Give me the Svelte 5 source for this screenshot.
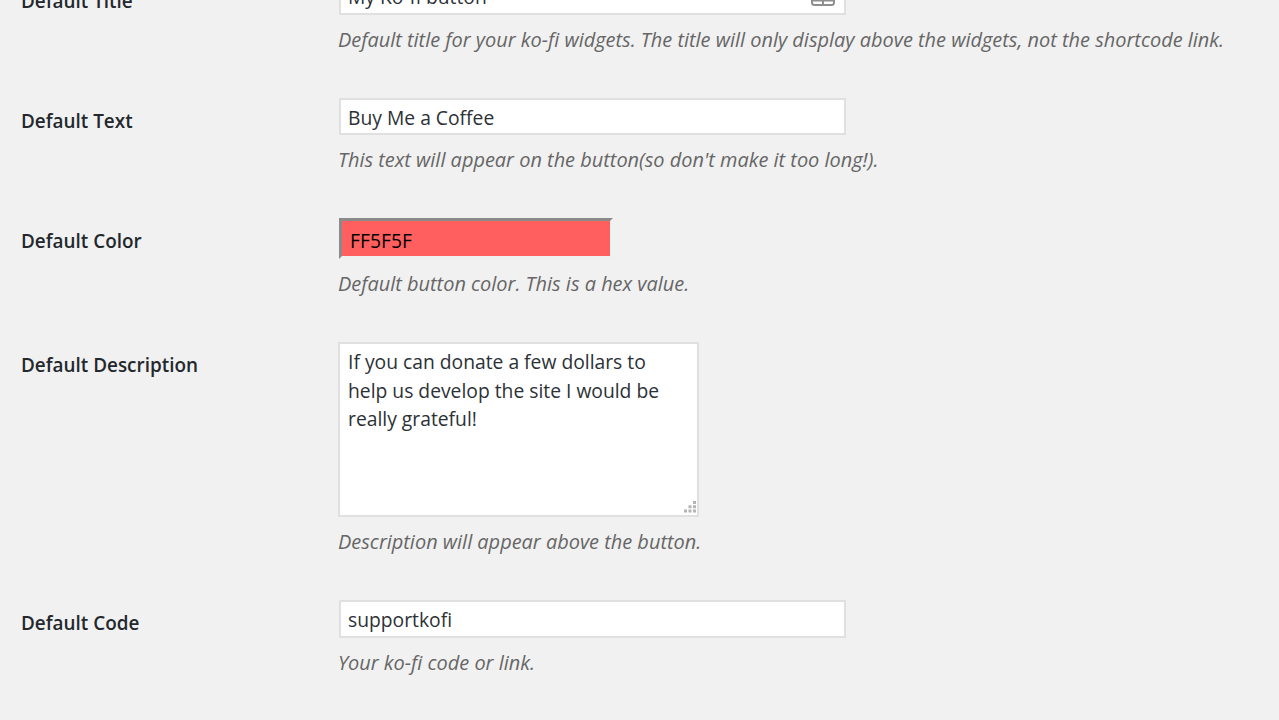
<script>
	let title = 'My Ko-fi button';
	let text = 'Buy Me a Coffee';
	let color = 'FF5F5F';
	let description = 'If you can donate a few dollars to\nhelp us develop the site I would be\nreally grateful!';
	let code = 'supportkofi';
</script>

<div class="page">
	<form class="settings">
		<div class="row">
			<label class="name" for="title">Default Title</label>
			<div class="field">
				<div class="input-wrap">
					<input id="title" class="text" type="text" value={title} />
					<svg class="autofill" width="24" height="18" viewBox="0 0 24 18" aria-hidden="true">
						<rect x="1" y="1" width="22" height="16" rx="2.5" fill="none" stroke="#8f8f8f" stroke-width="2" />
						<path d="M1 12.500h22M12 12.500v4" stroke="#8f8f8f" stroke-width="2" fill="none" />
					</svg>
				</div>
				<p class="desc">Default title for your ko-fi widgets. The title will only display above the widgets, not the shortcode link.</p>
			</div>
		</div>

		<div class="row">
			<label class="name" for="text">Default Text</label>
			<div class="field">
				<input id="text" class="text" type="text" value={text} />
				<p class="desc">This text will appear on the button(so don't make it too long!).</p>
			</div>
		</div>

		<div class="row">
			<label class="name" for="color">Default Color</label>
			<div class="field">
				<input id="color" class="color" type="text" value={color} />
				<p class="desc">Default button color. This is a hex value.</p>
			</div>
		</div>

		<div class="row">
			<label class="name" for="description">Default Description</label>
			<div class="field">
				<div class="area-wrap">
					<textarea id="description" value={description}></textarea>
					<svg class="grip" width="12" height="12" viewBox="0 0 12 12" aria-hidden="true">
						<path d="M9 0h3v3H9zM4.500 4.250h3v3h-3zM9 4.250h3v3H9zM0 8.500h3v3H0zM4.500 8.500h3v3h-3zM9 8.500h3v3H9z" fill="#b4b4b4" />
					</svg>
				</div>
				<p class="desc">Description will appear above the button.</p>
			</div>
		</div>

		<div class="row">
			<label class="name" for="code">Default Code</label>
			<div class="field">
				<input id="code" class="text" type="text" value={code} />
				<p class="desc">Your ko-fi code or link.</p>
			</div>
		</div>
	</form>
</div>

<style>
:global(body) {
	margin: 0;
	background: #f1f1f1;
	overflow: hidden;
}

.page {
	height: 720px;
	overflow: hidden;
	background: #f1f1f1;
	font-family: "Open Sans", "Noto Sans", sans-serif;
	color: #23282d;
}

.settings {
	display: flex;
	flex-direction: column;
	margin-top: -22.500px;
	padding-left: 21px;
}

.row {
	display: grid;
	grid-template-columns: 317px 1fr;
}

.name {
	font-size: 18.900px;
	font-weight: 600;
	line-height: 28px;
	padding-top: 9px;
	color: #23282d;
}

.field {
	display: flex;
	flex-direction: column;
	align-items: flex-start;
	padding-bottom: 44.400px;
}

.input-wrap, .area-wrap {
	position: relative;
	display: flex;
}

.text {
	box-sizing: border-box;
	width: 507px;
	height: 37.500px;
	margin-left: 1px;
	padding: 1px 7px 0;
	border: 2px solid #e0e0e0;
	background: #fff;
	font: inherit;
	font-size: 19.300px;
	color: #2c3136;
	outline: none;
}

.autofill {
	position: absolute;
	right: 11px;
	top: 10px;
}

.color {
	box-sizing: border-box;
	width: 274px;
	height: 41px;
	margin-left: 1px;
	padding: 3px 8px 0;
	border: 3px solid;
	border-color: #8a8a8a #f0f0f0 #f0f0f0 #8a8a8a;
	background: #ff5f5f;
	font: inherit;
	font-size: 19.300px;
	color: #000;
	outline: none;
}

textarea {
	box-sizing: border-box;
	display: block;
	width: 361px;
	height: 175px;
	padding: 4px 8px;
	border: 2px solid #e0e0e0;
	background: #fff;
	font: inherit;
	font-size: 19.300px;
	line-height: 28.500px;
	color: #2c3136;
	resize: none;
	outline: none;
}

.grip {
	position: absolute;
	right: 3.500px;
	bottom: 4.500px;
}

.desc {
	margin: 10.600px 0 0;
	font-size: 19.950px;
	line-height: 28px;
	font-style: italic;
	color: #666;
	white-space: nowrap;
}
</style>
